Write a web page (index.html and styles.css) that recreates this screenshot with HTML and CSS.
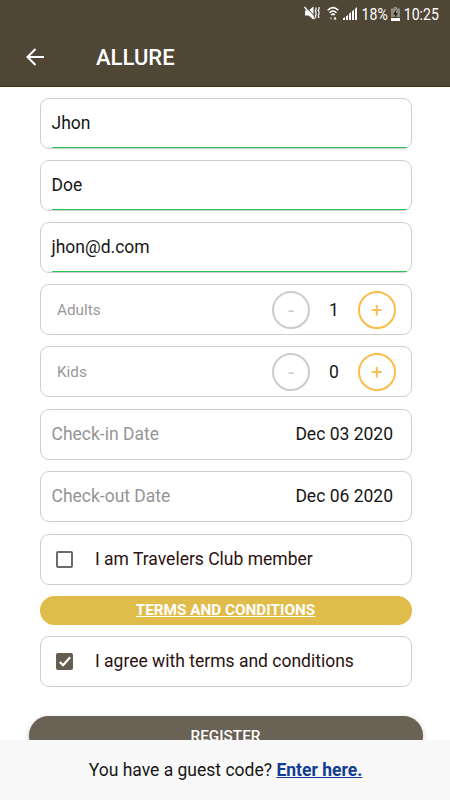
FILE: index.html
```
<!DOCTYPE html>
<html lang="en">
<head>
    <meta charset="UTF-8">
    <meta name="viewport" content="width=device-width, initial-scale=1.0">
    <title>Allure</title>
    <link rel="stylesheet" href="styles.css">
</head>
<body>
    <header class="header">
        <div class="status-bar">
            <svg class="icon-mute" viewBox="0 0 16 14" width="16" height="14">
                <path d="M1 4.500h3.500L9.500 .5v13L4.500 9.500H1z" fill="#fff"/>
                <path d="M1.500 0l9 10" stroke="#4f4636" stroke-width="1"/>
                <path d="M.5 1l10 12" stroke="#fff" stroke-width="1.300"/>
                <path d="M12 1.500v2l-.7 1.500.7 1.500v2l-.7 1.500.7 2M15 1v2l-.8 1.500.8 1.500v2l-.8 1.500.8 2.500" fill="none" stroke="#fff" stroke-width="1.200"/>
            </svg>
            <svg class="icon-wifi" viewBox="0 0 12 15" width="12" height="15">
                <path d="M.7 4.300Q6-1 11.300 4.300M2.500 6.800Q6 3.300 9.500 6.800M4.200 9Q6 7.400 7.800 9" fill="none" stroke="#fff" stroke-width="1.600"/>
                <path d="M2.500 11.500h3L4 14z" fill="#a39d92"/>
                <path d="M6.500 13.500L8 10.500l1.500 3z" fill="#fff"/>
            </svg>
            <svg class="icon-signal" viewBox="0 0 14 13" width="14" height="13">
                <path d="M0 13v-1.500l2-1.500v3zM3 13V9.500L5 8v5zM6 13V7l2-2v8zM9 13V4.500l2-2V13zM12 13V2l2-2v13z" fill="#fff"/>
            </svg>
            <span class="battery-text">18%</span>
            <svg class="icon-battery" viewBox="0 0 9 14" width="9" height="14">
                <path d="M3 0h3v1.500h3V10H0V1.500h3z" fill="#918c82"/>
                <path d="M0 11h9v3H0z" fill="#fff"/>
                <path d="M5.500 2.500L2 7.500h2.300l-.8 4L7 6.300H4.800z" fill="#221d12"/>
            </svg>
            <span class="clock">10:25</span>
        </div>
        <div class="toolbar">
            <svg class="back" viewBox="0 0 18 18" width="18" height="18">
                <path d="M18 9H1.500M9.500 1L1.500 9l8 8" fill="none" stroke="#fff" stroke-width="2"/>
            </svg>
            <h1 class="title">ALLURE</h1>
        </div>
    </header>

    <main class="form">
        <div class="field input-field"><span>Jhon</span></div>
        <div class="field input-field"><span>Doe</span></div>
        <div class="field input-field"><span>jhon@d.com</span></div>
        <div class="field counter">
            <span class="counter-label">Adults</span>
            <button class="round-btn">-</button>
            <span class="count">1</span>
            <button class="round-btn plus">+</button>
        </div>
        <div class="field counter">
            <span class="counter-label">Kids</span>
            <button class="round-btn">-</button>
            <span class="count">0</span>
            <button class="round-btn plus">+</button>
        </div>
        <div class="field date-field">
            <span class="date-label">Check-in Date</span>
            <span>Dec 03 2020</span>
        </div>
        <div class="field date-field">
            <span class="date-label">Check-out Date</span>
            <span>Dec 06 2020</span>
        </div>
        <div class="field check-field member">
            <span class="checkbox"></span>
            <span>I am Travelers Club member</span>
        </div>
        <a class="terms">TERMS AND CONDITIONS</a>
        <div class="field check-field">
            <span class="checkbox checked">
                <svg viewBox="0 0 17 17" width="17" height="17">
                    <path d="M3.800 9l3.300 3.200 7-8" fill="none" stroke="#fff" stroke-width="2.200"/>
                </svg>
            </span>
            <span>I agree with terms and conditions</span>
        </div>
        <button class="register">REGISTER</button>
    </main>

    <footer class="footer">
        <span>You have a guest code?</span>
        <a class="enter">Enter here.</a>
    </footer>
</body>
</html>
```

FILE: styles.css
```
* {
    margin: 0;
    padding: 0;
    box-sizing: border-box;
    font-family: "Roboto", sans-serif;
}

body {
    display: flex;
    flex-direction: column;
    height: 100vh;
    background: #ffffff;
    color: #161616;
    font-size: 17.5px;
    overflow: hidden;
}

/* Header */
.header {
    flex: none;
    height: 87px;
    background: #4f4636;
    border-bottom: 1px solid #40300f;
    color: #ffffff;
}

.status-bar {
    display: flex;
    align-items: center;
    justify-content: flex-end;
    height: 28px;
    padding-right: 11px;
    font-size: 16px;
}

.icon-mute {
    margin-bottom: 2px;
}

.icon-wifi {
    margin-left: 7px;
    margin-bottom: 2px;
}

.icon-signal {
    margin-left: 4px;
    margin-bottom: 1px;
}

/* Narrow status bar digits */
.battery-text,
.clock {
    transform: scaleX(0.88);
    transform-origin: right;
}

.battery-text {
    margin-left: 1px;
}

.icon-battery {
    margin: 0 -1px 0 3px;
}

.toolbar {
    display: flex;
    align-items: center;
    height: 58px;
    padding-left: 26px;
}

.title {
    margin-left: 52px;
    font-size: 22px;
    font-weight: 500;
}

/* Form */
.form {
    display: flex;
    flex-direction: column;
    flex: 1;
    gap: 11.2px;
    min-height: 0;
    padding: 10.6px 38.5px 0 39.5px;
    overflow: hidden;
}

.field {
    display: flex;
    align-items: center;
    flex: none;
    height: 51px;
    border: 1px solid #cfcfcf;
    border-radius: 9px;
}

.input-field {
    padding: 0 4px 0 11px;
}

.input-field span {
    flex: 1;
    height: 49px;
    line-height: 49px;
    border-bottom: 1px solid #24c850;
}

.counter {
    padding: 0 14.5px 0 16.5px;
}

.counter-label {
    flex: 1;
    color: #999999;
    font-size: 15.3px;
}

.round-btn {
    width: 38px;
    height: 38px;
    border: 2px solid #cccccc;
    border-radius: 50%;
    background: none;
    color: #c8c8c8;
    font-size: 20px;
}

.plus {
    border-color: #f9bd4a;
    color: #f9bd4a;
}

.count {
    width: 48px;
    text-align: center;
}

.date-field {
    justify-content: space-between;
    padding: 0 17.5px 0 11px;
}

.date-label {
    color: #959595;
}

.check-field {
    gap: 22px;
    padding-left: 15.5px;
    color: #2c120f;
}

.member {
    margin-top: 0.6px;
}

.checkbox {
    width: 17px;
    height: 17px;
    border: 2px solid #6b6b6b;
    border-radius: 2px;
}

.checked {
    display: flex;
    border: none;
    background: #655d4f;
}

.terms {
    flex: none;
    height: 29px;
    border-radius: 15px;
    background: #e0bc4b;
    color: #ffffff;
    font-size: 15.3px;
    font-weight: 700;
    line-height: 29px;
    text-align: center;
    text-decoration: underline;
}

.register {
    flex: none;
    height: 39px;
    margin: 18px -11px 0;
    border: none;
    border-radius: 20px;
    background: #6a6255;
    box-shadow: 0 2px 5px rgba(0, 0, 0, 0.25);
    color: #ffffff;
    font-size: 15.3px;
    font-weight: 500;
}

/* Footer */
.footer {
    display: flex;
    align-items: center;
    justify-content: center;
    flex: none;
    gap: 4.5px;
    height: 60px;
    padding-left: 1px;
    background: #f8f8f8;
}

.enter {
    color: #123c94;
    font-weight: 700;
    text-decoration: underline;
}
```
